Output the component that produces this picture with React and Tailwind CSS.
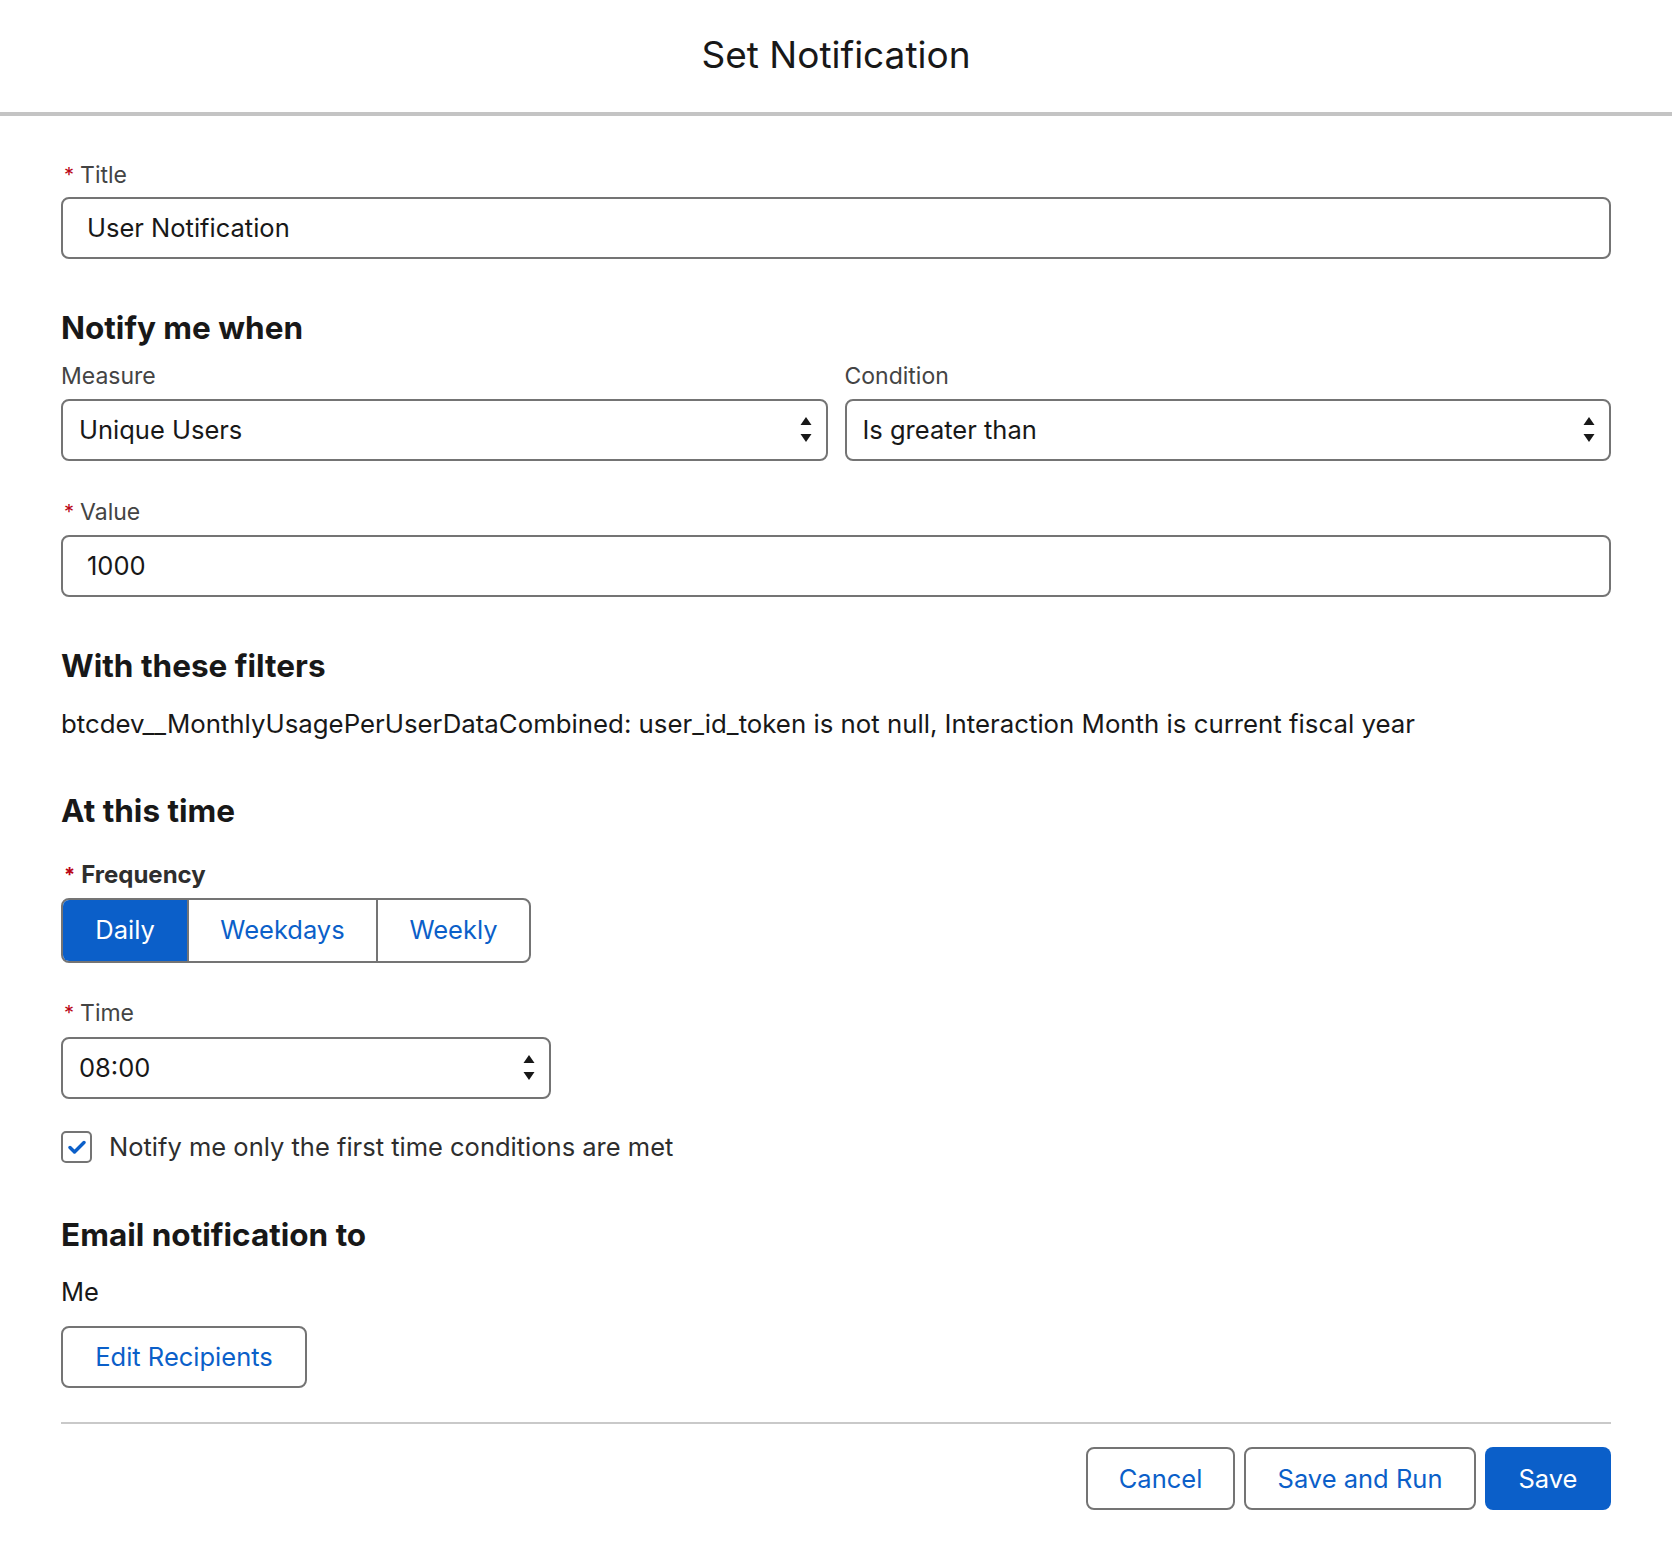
import React from 'react'

const font = { fontFamily: 'Inter, "Noto Sans", sans-serif' }

function Req() {
  return <span className="text-[#ba0517] ml-[3px] mr-[6px] text-[20px]">*</span>
}

function Label({ children, required, bold }) {
  return (
    <div className={`h-[30px] flex items-center leading-[30px] ${bold ? 'text-[24px] font-bold text-[#2e2e2e]' : 'text-[23px] text-[#444444]'}`}>
      {required && <Req />}
      {children}
    </div>
  )
}

function Heading({ children, className = '' }) {
  return <h2 className={`text-[31.5px] leading-[38px] font-bold text-[#181818] ${className}`}>{children}</h2>
}

function Arrows() {
  return (
    <svg width="14" height="30" viewBox="0 0 14 30" className="shrink-0">
      <path d="M7 2 L12.5 10 L1.5 10 Z" fill="#181818" />
      <path d="M7 27 L12.5 19 L1.5 19 Z" fill="#181818" />
    </svg>
  )
}

function Select({ value, className = '' }) {
  return (
    <div className={`h-[62px] border-2 border-[#747474] rounded-[8px] flex items-center justify-between pl-[16px] pr-[13px] text-[25.5px] text-[#181818] ${className}`}>
      <span>{value}</span>
      <Arrows />
    </div>
  )
}

function Input({ value }) {
  return (
    <div className="h-[62px] border-2 border-[#747474] rounded-[8px] flex items-center px-[24px] text-[25.5px] text-[#181818]">
      {value}
    </div>
  )
}

export default function App() {
  return (
    <div className="w-[1672px] min-h-[1544px] bg-white" style={font}>
      <header className="h-[116px] flex items-center justify-center border-b-4 border-[#c4c4c4]">
        <h1 className="text-[37px] text-[#181818] -mt-[2px]">Set Notification</h1>
      </header>

      <div className="px-[61px] pt-[44px] pb-[32px]">
        <Label required>Title</Label>
        <div className="mt-[7px]">
          <Input value="User Notification" />
        </div>

        <Heading className="mt-[50px]">Notify me when</Heading>
        <div className="grid grid-cols-2 gap-[17px] mt-[14px]">
          <div>
            <Label>Measure</Label>
            <Select className="mt-[8px]" value="Unique Users" />
          </div>
          <div>
            <Label>Condition</Label>
            <Select className="mt-[8px]" value="Is greater than" />
          </div>
        </div>

        <div className="mt-[36px]">
          <Label required>Value</Label>
          <div className="mt-[8px]">
            <Input value="1000" />
          </div>
        </div>

        <Heading className="mt-[50px]">With these filters</Heading>
        <p className="mt-[22px] text-[25.8px] leading-[34px] text-[#181818]">
          btcdev__MonthlyUsagePerUserDataCombined: user_id_token is not null, Interaction Month is current fiscal year
        </p>

        <Heading className="mt-[51px]">At this time</Heading>
        <div className="mt-[30px]">
          <Label required bold>Frequency</Label>
          <div className="mt-[8px] inline-flex h-[65px] border-2 border-[#747474] rounded-[8px] overflow-hidden text-[25.5px]">
            <button className="w-[124px] bg-[#0b5fc9] text-white">Daily</button>
            <button className="w-[189px] border-l-2 border-[#747474] text-[#0b5fc9]">Weekdays</button>
            <button className="w-[153px] border-l-2 border-[#747474] text-[#0b5fc9]">Weekly</button>
          </div>
        </div>

        <div className="mt-[35px]">
          <Label required>Time</Label>
          <Select className="mt-[9px] w-[490px]" value="08:00" />
        </div>

        <label className="mt-[29px] flex items-center gap-[17px]">
          <span className="w-[31px] h-[32px] border-2 border-[#747474] rounded-[5px] flex items-center justify-center">
            <svg width="18" height="14" viewBox="0 0 18 14">
              <path d="M2 7.5 L6.5 12 L16 2.5" stroke="#0b5fc9" strokeWidth="3.4" fill="none" strokeLinecap="round" strokeLinejoin="round" />
            </svg>
          </span>
          <span className="text-[25.5px] text-[#2e2e2e]">Notify me only the first time conditions are met</span>
        </label>

        <Heading className="mt-[50px]">Email notification to</Heading>
        <p className="mt-[21px] text-[25.5px] leading-[34px] text-[#181818]">Me</p>
        <button className="mt-[17px] h-[62px] w-[246px] border-2 border-[#747474] rounded-[8px] text-[25.5px] text-[#0b5fc9]">
          Edit Recipients
        </button>

        <div className="mt-[34px] border-t-2 border-[#c9c9c9]" />

        <div className="mt-[23px] flex justify-end gap-[9px] text-[25.5px]">
          <button className="h-[63px] w-[149px] border-2 border-[#747474] rounded-[8px] text-[#0b5fc9]">Cancel</button>
          <button className="h-[63px] w-[232px] border-2 border-[#747474] rounded-[8px] text-[#0b5fc9]">Save and Run</button>
          <button className="h-[63px] w-[126px] rounded-[8px] bg-[#0b5fc9] text-white">Save</button>
        </div>
      </div>
    </div>
  )
}
